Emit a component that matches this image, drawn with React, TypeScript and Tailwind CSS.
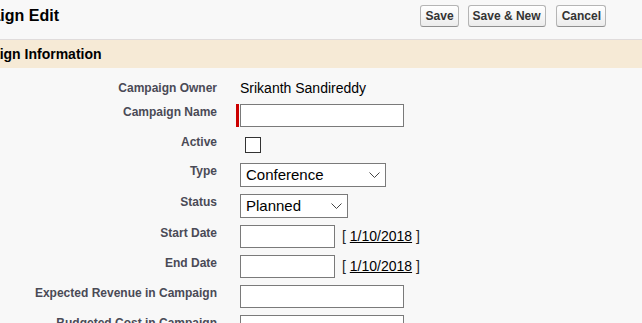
import type { ReactNode } from "react";

function Btn({ children }: { children: ReactNode }) {
  return (
    <button className="h-[22px] px-[4px] rounded-[3px] border border-[#b5b5b5] border-b-[#8f8f8f] bg-linear-to-b from-white to-[#ececec] text-[12px] font-bold leading-none text-[#333]">
      {children}
    </button>
  );
}

function Row({ label, h, children }: { label: string; h: number; children?: ReactNode }) {
  return (
    <div className="flex items-start" style={{ height: h }}>
      <div className="w-[217px] text-right text-[12px] leading-[16px] font-bold text-[#4a4a56] whitespace-nowrap">{label}</div>
      <div className="ml-[19px] flex items-start">{children}</div>
    </div>
  );
}

function Box({ w, required }: { w: number; required?: boolean }) {
  return (
    <div className="flex">
      <div className={`w-[3px] h-[23px] ${required ? "bg-[#c00]" : ""}`} />
      <input className="ml-[1px] h-[23px] border border-[#7a7a7a] bg-white outline-none" style={{ width: w }} />
    </div>
  );
}

function Select({ w, value }: { w: number; value: string }) {
  return (
    <div className="flex">
      <div className="w-[4px]" />
      <div
        className="h-[24px] border border-[#7a7a7a] bg-white flex items-center justify-between pl-[5px] pr-[5px] text-[15px] text-black"
        style={{ width: w }}
      >
        <span>{value}</span>
        <svg width="11" height="6" viewBox="0 0 11 6" fill="none">
          <path d="M0.5 0.5 L5.5 5.5 L10.5 0.5" stroke="#444" strokeWidth="1" />
        </svg>
      </div>
    </div>
  );
}

function DateField() {
  return (
    <div className="flex items-center">
      <Box w={95} />
      <span className="ml-[7px] text-[14px] text-[#222] whitespace-nowrap">
        [ <span className="underline text-black">1/10/2018</span> ]
      </span>
    </div>
  );
}

export default function App() {
  return (
    <div className="w-[642px] h-[323px] overflow-hidden bg-[#f8f8f8] font-['Liberation_Sans',Arial,sans-serif]">
      <div className="h-[40px] border-b border-[#e0dcdc] flex items-start justify-between pr-[36px]">
        <h1 className="-ml-[53px] mt-[6px] text-[16px] leading-[20px] font-bold text-black whitespace-nowrap">Campaign Edit</h1>
        <div className="mt-[5px] flex">
          <Btn>
            <span className="pl-[1px]">Save</span>
          </Btn>
          <div className="w-[9px]" />
          <Btn>Save &amp; New</Btn>
          <div className="w-[10px]" />
          <Btn>
            <span className="pl-[1px]">Cancel</span>
          </Btn>
        </div>
      </div>
      <div className="h-[28px] bg-[#f6ead6] flex items-center">
        <h2 className="-ml-[47px] text-[14px] font-bold text-black whitespace-nowrap">Campaign Information</h2>
      </div>
      <div className="pt-[12px]">
        <Row label="Campaign Owner" h={24}>
          <span className="ml-[4px] text-[14px] leading-[16px] text-black whitespace-nowrap">Srikanth Sandireddy</span>
        </Row>
        <Row label="Campaign Name" h={30}>
          <Box w={164} required />
        </Row>
        <Row label="Active" h={29}>
          <div className="ml-[9px] mt-[3px] w-[16px] h-[16px] border border-[#333] bg-white" />
        </Row>
        <Row label="Type" h={31}>
          <Select w={146} value="Conference" />
        </Row>
        <Row label="Status" h={31}>
          <Select w={108} value="Planned" />
        </Row>
        <Row label="Start Date" h={30}>
          <DateField />
        </Row>
        <Row label="End Date" h={30}>
          <DateField />
        </Row>
        <Row label="Expected Revenue in Campaign" h={30}>
          <Box w={164} />
        </Row>
        <Row label="Budgeted Cost in Campaign" h={30}>
          <Box w={164} />
        </Row>
      </div>
    </div>
  );
}
